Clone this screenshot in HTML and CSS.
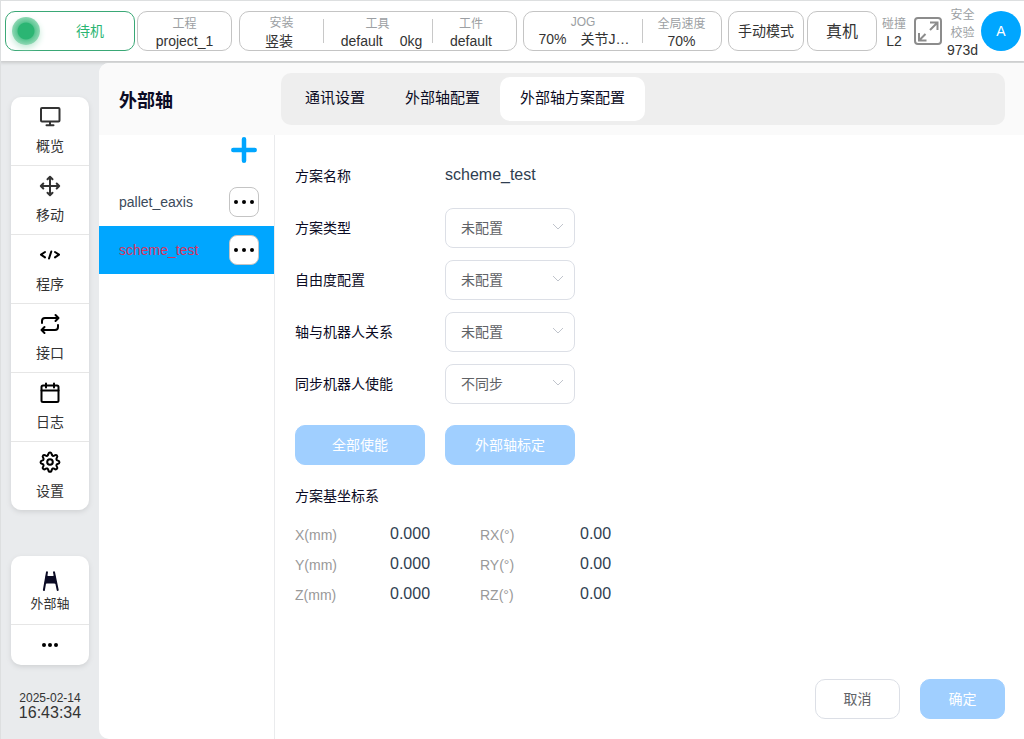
FILE: index.html
```html
<!DOCTYPE html>
<html lang="zh-CN">
<head>
<meta charset="utf-8">
<title>外部轴</title>
<meta name="viewport" content="width=device-width, initial-scale=1">
<link rel="stylesheet" href="styles.css">
</head>
<body>
<header class="topbar">
  <button class="box status"><span class="status-light"></span><span class="status-text">待机</span></button>
  <button class="box project"><span class="caption">工程</span><span class="value">project_1</span></button>
  <div class="box group install-group">
    <div class="cell install"><span class="caption">安装</span><span class="value">竖装</span></div>
    <div class="cell tool"><span class="caption">工具</span><span class="value pair"><span>default</span><span>0kg</span></span></div>
    <div class="cell work"><span class="caption">工件</span><span class="value">default</span></div>
  </div>
  <div class="box group speed-group">
    <div class="cell jog"><span class="caption">JOG</span><span class="value pair"><span>70%</span><span>关节J…</span></span></div>
    <div class="cell global"><span class="caption">全局速度</span><span class="value">70%</span></div>
  </div>
  <button class="box mode">手动模式</button>
  <button class="box machine">真机</button>
  <div class="cell collision"><span class="caption">碰撞</span><span class="value">L2</span></div>
  <button class="expand" aria-label="全屏">
    <svg width="28" height="30" viewBox="0 0 28 30" fill="none" stroke="#8c8c8c" stroke-width="2">
      <rect x="1" y="2" width="26" height="26" rx="3"/>
      <path d="M16 6.500h7.500v7.500M23 7l-7 7M5 17v7.500h7.500M5.500 24l6-6"/>
    </svg>
  </button>
  <div class="cell safety"><span class="caption">安全<br>校验</span><span class="value">973d</span></div>
  <button class="avatar">A</button>
</header>

<div class="body">
  <aside class="sidebar">
    <nav class="card">
      <a class="nav-item" href="#overview">
        <svg width="24" height="24" viewBox="0 0 24 24" class="icon soft"><rect x="3" y="3" width="18.500" height="13.500" rx="1"/><path d="M12 17v3M8.500 20.300h7"/></svg>
        <span>概览</span></a>
      <a class="nav-item" href="#move">
        <svg width="24" height="24" viewBox="0 0 24 24" class="icon soft"><path d="M12 3v18M3 12h18M9.500 5.300L12 2.800l2.500 2.500M9.500 18.700l2.500 2.500 2.500-2.500M5.300 9.500L2.800 12l2.500 2.500M18.700 9.500l2.500 2.500-2.500 2.500"/></svg>
        <span>移动</span></a>
      <a class="nav-item" href="#program">
        <svg width="24" height="24" viewBox="0 0 24 24" class="icon"><path d="M7 9l-4 2.700 4 2.700M17 9l4 2.700-4 2.700M13.300 8.500l-2.300 7"/></svg>
        <span>程序</span></a>
      <a class="nav-item" href="#interface">
        <svg width="24" height="24" viewBox="0 0 24 24" class="icon"><path d="M17.500 3l3 3-3 3M4 11V9a3 3 0 0 1 3-3h13M6.500 21l-3-3 3-3M20 13v2a3 3 0 0 1-3 3H4"/></svg>
        <span>接口</span></a>
      <a class="nav-item" href="#log">
        <svg width="24" height="24" viewBox="0 0 24 24" class="icon"><rect x="3.500" y="4.500" width="17" height="16.500" rx="1.500"/><path d="M8 2.500v4M16 2.500v4M3.500 9.500h17"/></svg>
        <span>日志</span></a>
      <a class="nav-item" href="#settings">
        <svg width="24" height="24" viewBox="0 0 24 24" class="icon"><circle cx="12" cy="12" r="2.800"/><path d="M10.200 4.600c.5-2.800 3.100-2.800 3.600 0 .3 1.200 1.400 1.600 2.400 1 2.300-1.600 4.100.2 2.500 2.500-.6 1-.2 2 .9 2.300 2.500.5 2.500 3 0 3.500-1.100.3-1.500 1.300-.9 2.300 1.600 2.300-.2 4.100-2.500 2.500-1-.6-2.100-.2-2.400 1-.5 2.800-3.100 2.800-3.600 0-.3-1.200-1.400-1.600-2.400-1-2.300 1.600-4.100-.2-2.500-2.500.6-1 .2-2-.9-2.300-2.500-.5-2.500-3 0-3.500 1.100-.3 1.500-1.300.9-2.300-1.600-2.300.2-4.100 2.500-2.500 1 .6 2.100.2 2.400-1z"/></svg>
        <span>设置</span></a>
    </nav>
    <nav class="card shortcut">
      <a class="nav-item compact" href="#axis">
        <svg width="20" height="24" viewBox="0 0 20 24" fill="#0b0b24" stroke="#0b0b24" stroke-linecap="round"><path stroke="none" d="M6 6l2 1h5l2-1 1.500 9-2.500-.5H7L4.500 15z"/><path d="M7 3.200L3.900 21M14 3.200L17.700 21" fill="none" stroke-width="2"/></svg>
        <span>外部轴</span></a>
      <button class="more" aria-label="更多"><span class="dots small"></span></button>
    </nav>
    <div class="clock"><span class="date">2025-02-14</span><time>16:43:34</time></div>
  </aside>

  <main class="panel">
    <div class="panel-head">
      <h1>外部轴</h1>
      <div class="tabs" role="tablist">
        <button class="tab" role="tab">通讯设置</button>
        <button class="tab" role="tab">外部轴配置</button>
        <button class="tab active" role="tab" aria-selected="true">外部轴方案配置</button>
      </div>
    </div>
    <div class="content">
      <section class="schemes">
        <button class="add" aria-label="添加"><svg width="26" height="26" viewBox="0 0 26 26" stroke="#00a6ff" stroke-width="4.500" stroke-linecap="round"><path d="M13 2.300v21.400M2.300 13h21.400"/></svg></button>
        <div class="scheme"><span>pallet_eaxis</span><button class="dots-button" aria-label="更多操作"><span class="dots"></span></button></div>
        <div class="scheme selected"><span>scheme_test</span><button class="dots-button" aria-label="更多操作"><span class="dots"></span></button></div>
      </section>
      <form class="form">
        <div class="row"><span class="label">方案名称</span><span class="name">scheme_test</span></div>
        <div class="row"><label class="label" for="type">方案类型</label>
          <div class="field"><select id="type"><option>未配置</option></select><svg class="chevron" width="12" height="8" viewBox="0 0 12 8"><path d="M1 1l5 5 5-5"/></svg></div></div>
        <div class="row"><label class="label" for="dof">自由度配置</label>
          <div class="field"><select id="dof"><option>未配置</option></select><svg class="chevron" width="12" height="8" viewBox="0 0 12 8"><path d="M1 1l5 5 5-5"/></svg></div></div>
        <div class="row"><label class="label" for="relation">轴与机器人关系</label>
          <div class="field"><select id="relation"><option>未配置</option></select><svg class="chevron" width="12" height="8" viewBox="0 0 12 8"><path d="M1 1l5 5 5-5"/></svg></div></div>
        <div class="row"><label class="label" for="sync">同步机器人使能</label>
          <div class="field"><select id="sync"><option>不同步</option></select><svg class="chevron" width="12" height="8" viewBox="0 0 12 8"><path d="M1 1l5 5 5-5"/></svg></div></div>
        <div class="actions">
          <button type="button" class="button primary wide" disabled>全部使能</button>
          <button type="button" class="button primary wide" disabled>外部轴标定</button>
        </div>
        <h2>方案基坐标系</h2>
        <dl class="coords">
          <dt>X(mm)</dt><dd>0.000</dd><dt>RX(°)</dt><dd>0.00</dd>
          <dt>Y(mm)</dt><dd>0.000</dd><dt>RY(°)</dt><dd>0.00</dd>
          <dt>Z(mm)</dt><dd>0.000</dd><dt>RZ(°)</dt><dd>0.00</dd>
        </dl>
        <div class="footer">
          <button type="button" class="button">取消</button>
          <button type="submit" class="button primary" disabled>确定</button>
        </div>
      </form>
    </div>
  </main>
</div>
</body>
</html>
```
FILE: styles.css
```css
* { box-sizing: border-box; }

body {
  margin: 0;
  min-height: 100vh;
  display: flex;
  flex-direction: column;
  border: solid #dddfe0;
  border-width: 1px 0 0 1px;
  background: #e9ebed;
  color: #333;
  font: 14px/18px "Liberation Sans", "Noto Sans CJK SC", sans-serif;
}

button, select { font: inherit; color: inherit; }
button { padding: 0; border: 0; background: none; cursor: pointer; }
a { color: inherit; text-decoration: none; }

/* top bar */
.topbar {
  display: flex;
  align-items: center;
  height: 60px;
  padding: 0 3px 0 4px;
  background: #fff;
  box-shadow: 0 1px 3px 1px #c8cacb;
}
.box {
  display: flex;
  flex-direction: column;
  align-items: center;
  justify-content: center;
  height: 40px;
  border: 1px solid #c4c4c4;
  border-radius: 10px;
  background: #fff;
}
.status { flex-direction: row; width: 130px; padding-left: 6px; border-color: #3aa876; color: #2bb573; justify-content: flex-start; }
.status-light {
  width: 28px;
  height: 28px;
  border-radius: 50%;
  background: radial-gradient(circle, #2bb573 0 8px, #5cc693 9px, #8fd8b4 14px);
  box-shadow: 0 3px 6px #c4ead7;
}
.status-text { flex: 1; padding-left: 6px; }
.project { width: 95px; margin-left: 2px; }
.group { flex-direction: row; align-items: stretch; justify-content: flex-start; }
.install-group { width: 278px; margin-left: 7px; }
.speed-group { width: 199px; margin-left: 6px; }
.cell { display: flex; flex-direction: column; align-items: center; justify-content: center; }
.group .cell { position: relative; }
.group .cell + .cell::before {
  content: "";
  position: absolute;
  left: 0;
  top: 7px;
  bottom: 7px;
  border-left: 1px solid #c8c8c8;
}
.caption { padding-top: 1px; color: #9c9fa3; font-size: 12px; line-height: 18px; }
.value { line-height: 16px; white-space: nowrap; }
.pair { display: flex; gap: 17px; }
.install { width: 83px; padding-right: 5px; }
.install .caption { padding: 0 0 1px 5px; }
.tool { width: 109px; }
.tool .value { padding-left: 8px; }
.work { flex: 1; padding-right: 6px; }
.jog { width: 118px; padding-bottom: 4px; }
.jog .pair { gap: 14px; padding-left: 2px; }
.global { flex: 1; }
.mode { width: 76px; margin-left: 6px; }
.machine { width: 70px; margin-left: 3px; padding-top: 1px; font-size: 16px; }
.collision { width: 26px; margin-left: 4px; }
.expand { display: flex; margin-left: 7px; }
.safety { width: 31px; margin-left: 5px; }
.avatar { width: 40px; height: 40px; margin-left: auto; border-radius: 50%; background: #00a6ff; color: #fff; }

/* side bar */
.body { flex: 1; display: flex; }
.sidebar { width: 98px; padding: 36px 10px 18px 10px; display: flex; flex-direction: column; }
.card { border-radius: 10px; background: #fff; box-shadow: 0 2px 5px #d0d2d4; }
.nav-item {
  display: flex;
  flex-direction: column;
  align-items: center;
  gap: 8px;
  height: 69px;
  padding-top: 8px;
  border-bottom: 1px solid #e6e6e6;
}
.nav-item:last-child { height: 68px; border-bottom: 0; }
.icon { fill: none; stroke: #000; stroke-width: 2; stroke-linecap: round; stroke-linejoin: round; }
.icon.soft { stroke: #333; }
.shortcut { margin-top: 46px; }
.compact { gap: 2px; padding-top: 13px; font-size: 13px; }
.more { display: flex; align-items: center; justify-content: center; width: 100%; height: 40px; }
.clock { margin-top: auto; display: flex; flex-direction: column; align-items: center; line-height: 16px; }
.clock .date { font-size: 12px; line-height: 14px; }
.clock time { font-size: 16px; }

.dots { width: 4px; height: 4px; border-radius: 50%; background: #000; box-shadow: -8px 0 #000, 8px 0 #000; }
.dots.small { width: 4px; height: 4px; box-shadow: -6px 0 #000, 6px 0 #000; }

/* panel */
.panel {
  flex: 1;
  display: flex;
  flex-direction: column;
  margin-top: 2px;
  overflow: hidden;
  border-radius: 10px 0 0 10px;
  background: #fff;
}
.panel-head { display: flex; align-items: center; height: 72px; padding: 0 19px 0 20px; background: #fafafa; }
h1 { width: 162px; margin: 0; padding-top: 3px; color: #0b0b24; font-size: 18px; line-height: 24px; }
.tabs { flex: 1; display: flex; height: 52px; padding: 4px; border-radius: 10px; background: #eee; }
.tab { padding: 0 20px 2px; border-radius: 10px; color: #0b0b24; font-size: 15px; }
.tab.active { background: #fff; }

.content { flex: 1; display: flex; }
.schemes { width: 176px; border-right: 1px solid #eaebed; display: flex; flex-direction: column; }
.add { display: flex; align-self: flex-end; margin: 2px 17px 15px 0; }
.scheme {
  display: flex;
  align-items: center;
  justify-content: space-between;
  height: 48px;
  padding: 0 15px 0 20px;
  color: #3b4a5b;
}
.scheme.selected { background: #00a6ff; color: #d5355f; }
.dots-button {
  display: flex;
  align-items: center;
  justify-content: center;
  width: 30px;
  height: 30px;
  border: 1px solid #c4c4c4;
  border-radius: 8px;
  background: #fff;
}

/* form */
.form { flex: 1; display: flex; flex-direction: column; padding: 21px 19px 20px 20px; }
.row { display: flex; align-items: center; height: 40px; margin-bottom: 12px; }
.row .label { width: 150px; color: #0b0b24; }
.name { padding-bottom: 2px; color: #2f3e50; font-size: 16px; }
.field { position: relative; width: 130px; }
.field select {
  display: block;
  width: 100%;
  height: 40px;
  padding: 0 30px 0 15px;
  appearance: none;
  border: 1px solid #dcdfe6;
  border-radius: 8px;
  background: #fff;
  color: #606266;
}
.chevron { position: absolute; right: 11px; top: 15px; fill: none; stroke: #c0c4cc; pointer-events: none; }
.actions { display: flex; gap: 20px; margin-top: 9px; }
.button { width: 85px; height: 40px; border: 1px solid #dcdfe6; border-radius: 10px; background: #fff; color: #606266; }
.button.primary { border-color: #a0cfff; background: #a0cfff; color: #fff; }
.button.wide { width: 130px; }
h2 { margin: 22px 0 20px; color: #0b0b24; font-size: 14px; font-weight: normal; line-height: 18px; }
.coords { display: grid; grid-template-columns: 85px 100px 90px 50px; grid-auto-rows: 30px; margin: 0; }
.coords dt { padding-top: 1px; color: #999; }
.coords dd { margin: 0; padding-left: 10px; color: #2f3e50; font-size: 16px; }
.footer { display: flex; justify-content: flex-end; gap: 20px; margin-top: auto; }
```
